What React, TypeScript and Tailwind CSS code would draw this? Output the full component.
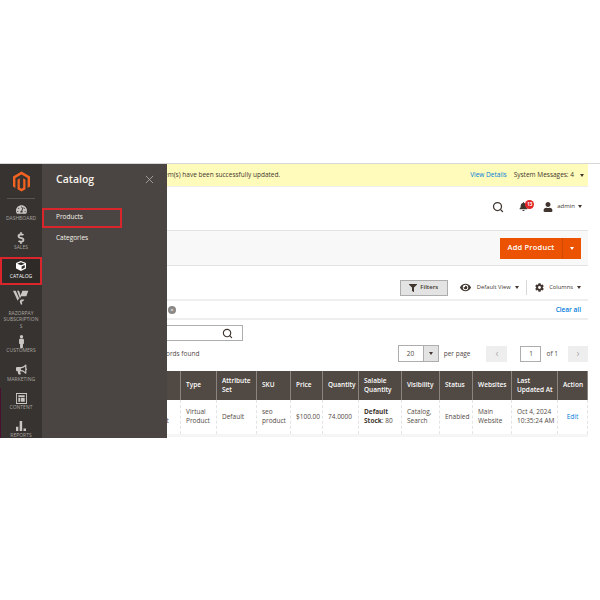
import { FaBell, FaCog, FaCube, FaDollarSign, FaEye, FaFilter, FaMale, FaBullhorn, FaTachometerAlt, FaUser } from "react-icons/fa";
import { FiSearch } from "react-icons/fi";

function MagentoLogo() {
  return (
    <svg viewBox="0 0 24 28" className="w-[17px] h-[21px]">
      <path fill="#f26322" d="M12 0 0 7v14l3.4 2V9l8.6-5 8.600 5v14l3.400-2V7z" />
      <path fill="#f26322" d="M12 24.200 9.600 22.800V9.500L6.400 11.400V24.800L12 28l5.600-3.200V11.400l-3.200-1.900v13.300z" />
    </svg>
  );
}

function RazorpayLogo() {
  return (
    <svg viewBox="0 0 24 24" className="w-[16px] h-[17px]" fill="#c9c6c3">
      <path d="M0 2h4l5 11-2 4z" />
      <path d="M6 2h3l3 8-1.500 4z" />
      <path d="M14 2h9l-3 8h-9z" />
      <path d="M12 15h5l-2 3h-2l1 4-2 1-2-5z" />
    </svg>
  );
}

function ContentIcon() {
  return (
    <svg viewBox="0 0 12 12" className="w-[11px] h-[11px]" fill="#c9c6c3">
      <path fillRule="evenodd" d="M0 0h12v12H0zM1 1v10h10V1z" />
      <path d="M2.500 2.500h7v1.800h-7zM2.500 5.200h2.200v4.300H2.500zM5.500 5.200h4v4.300h-4z" />
    </svg>
  );
}

function ReportsIcon() {
  return (
    <svg viewBox="0 0 12 12" className="w-[10px] h-[10px]" fill="#c9c6c3">
      <path d="M0 7h2.800v5H0zM4.400 0h3v12h-3zM9 9h3v3H9z" />
    </svg>
  );
}

function NavItem({ icon, label, className, labelGap = "" }: { icon: React.ReactNode; label: string; className: string; labelGap?: string }) {
  return (
    <div className={`shrink-0 flex flex-col items-center text-center px-[3px] ${className}`}>
      <div className="h-[12px] flex items-center justify-center text-[#c9c6c3]">{icon}</div>
      <span className={`text-[5px] leading-[6.500px] uppercase text-[#aaa6a0] [overflow-wrap:anywhere] ${labelGap}`}>{label}</span>
    </div>
  );
}

const headers = [
  { label: "Name", w: "w-[41px] pr-[5px]" },
  { label: "Type", w: "w-[36px] pr-[5px]" },
  { label: "Attribute Set", w: "w-[40px] pr-[5px]" },
  { label: "SKU", w: "w-[34px] pr-[5px]" },
  { label: "Price", w: "w-[32px] pr-[5px]" },
  { label: "Quantity", w: "w-[36px] pr-[5px]" },
  { label: "Salable Quantity", w: "w-[43px] pr-[5px]" },
  { label: "Visibility", w: "w-[38px] pr-[5px]" },
  { label: "Status", w: "w-[33px] pr-[5px]" },
  { label: "Websites", w: "w-[39px] pr-[5px]" },
  { label: "Last Updated At", w: "w-[46px] pr-[4px]" },
  { label: "Action", w: "w-[30px] pr-[3px]" },
];

const cells = ["seo product", "Virtual Product", "Default", "seo product", "$100.00", "74.0000"];

const cellClass = "px-[5px] leading-[8.500px] border-x border-dashed border-[#e3e3e3]";

function Caret({ color = "border-t-[#41362f]" }: { color?: string }) {
  return <span className={`inline-block w-0 h-0 border-x-[2.500px] border-x-transparent border-t-[3px] ${color}`} />;
}

export default function App() {
  return (
    <div className="w-[600px] h-[600px] bg-white font-['Open_Sans',sans-serif] overflow-hidden">
      <div className="h-[163px]" />
      <div className="relative h-[275px] overflow-hidden flex border-t border-[#d8d8d8]">
        <aside className="w-[42px] shrink-0 bg-[#373330] flex flex-col">
          <div className="h-[35px] shrink-0 mx-[7px] border-b border-[#5a5551] flex items-center justify-center">
            <MagentoLogo />
          </div>
          <NavItem className="mt-[4px]" icon={<FaTachometerAlt size={11} />} label="Dashboard" />
          <NavItem className="mt-[10px]" icon={<FaDollarSign size={12} />} label="Sales" />
          <div className="mt-[6.500px] h-[28px] shrink-0 border-2 border-[#d9252c] bg-[#2d2a28] flex flex-col items-center justify-center">
            <FaCube size={10} className="text-white" />
            <span className="mt-[2px] text-[5px] leading-[6.500px] uppercase text-white">Catalog</span>
          </div>
          <NavItem className="mt-[7px]" icon={<RazorpayLogo />} label="Razorpay Subscriptions" labelGap="mt-[6px]" />
          <NavItem className="mt-[6px]" icon={<FaMale size={13} />} label="Customers" />
          <NavItem className="mt-[10px]" icon={<FaBullhorn size={11} />} label="Marketing" />
          <NavItem className="mt-[10px]" icon={<ContentIcon />} label="Content" />
          <NavItem className="mt-[9px]" icon={<ReportsIcon />} label="Reports" />
        </aside>

        <main className="w-[546px] shrink-0 flex flex-col">
          <div className="h-[23px] shrink-0 bg-[#fffbbb] flex items-center justify-between pr-[4px] text-[6.500px] text-[#41362f] border-b border-[#eeeeee]">
            <span className="pl-[122px]">em(s) have been successfully updated.</span>
            <span className="flex items-center">
              <span className="text-[#007bdb]">View Details</span>
              <span className="ml-[7px]">System Messages: 4</span>
              <span className="ml-[6px] flex"><Caret /></span>
            </span>
          </div>

          <div className="h-[43px] shrink-0 flex items-center justify-end pr-[6px] pb-[4px] text-[#41362f]">
            <FiSearch size={12} strokeWidth={2.500} />
            <div className="relative ml-[15px] mr-[5px]">
              <FaBell size={9} />
              <span className="absolute -top-[2px] left-[6px] w-[9px] h-[9px] rounded-full bg-[#e22626] text-white text-[4.500px] font-bold flex items-center justify-center">13</span>
            </div>
            <FaUser size={10} className="ml-[10px]" />
            <span className="ml-[4px] text-[6px]">admin</span>
            <span className="ml-[3px] flex"><Caret /></span>
          </div>

          <div className="h-[36px] shrink-0 bg-[#f8f8f8] border-y border-[#e3e3e3] flex items-center justify-end pr-[7px]">
            <div className="h-[21px] w-[81px] bg-[#eb5202] flex items-center text-white text-[7.500px] font-semibold tracking-[0.200px]">
              <span className="flex-1 text-center">Add Product</span>
              <span className="w-[19px] h-full border-l border-[#d14a02] flex items-center justify-center">
                <Caret color="border-t-white" />
              </span>
            </div>
          </div>

          <div className="h-[33px] shrink-0 flex items-center justify-end pr-[7px] pt-[10px] text-[#41362f]">
            <div className="w-[48px] h-[16px] bg-[#e3e3e3] border border-[#adadad] flex items-center justify-center text-[6px] font-semibold">
              <FaFilter size={8} className="mr-[3px]" />
              Filters
            </div>
            <FaEye size={11} className="ml-[12px]" />
            <span className="ml-[6px] text-[5.800px]">Default View</span>
            <span className="ml-[4px] flex"><Caret /></span>
            <span className="ml-[7.500px] h-[15px] border-l border-[#d8d8d8]" />
            <FaCog size={9} className="ml-[8px]" />
            <span className="ml-[5px] text-[5.800px]">Columns</span>
            <span className="ml-[4px] flex"><Caret /></span>
          </div>

          <div className="h-[21px] shrink-0 border-y-2 border-y-[#eeeeee] flex items-center justify-between pr-[7px]">
            <span className="ml-[126px] w-[8px] h-[8px] rounded-full bg-[#8a8785] text-white text-[6px] leading-[8px] text-center">×</span>
            <span className="text-[6.500px] font-semibold text-[#007bdb]">Clear all</span>
          </div>

          <div className="mt-[5px] ml-[60px] w-[141px] h-[16px] shrink-0 border border-[#adadad] flex items-center justify-end pr-[9px] text-[#41362f]">
            <FiSearch size={11} strokeWidth={2.500} />
          </div>

          <div className="mt-[4px] h-[17px] shrink-0 flex items-center justify-between text-[6.500px] text-[#514943]">
            <span className="ml-[124px]">ords found</span>
            <div className="flex items-center">
              <div className="w-[41px] h-[17px] border border-[#adadad] flex">
                <span className="flex-1 flex items-center pl-[8px]">20</span>
                <span className="w-[15px] bg-[#e3e3e3] border-l border-[#adadad] flex items-center justify-center"><Caret /></span>
              </div>
              <span className="ml-[5px]">per page</span>
              <span className="ml-[16px] w-[21px] h-[16px] bg-[#eeeeee] flex items-center justify-center text-[#adadad] text-[10px]">‹</span>
              <span className="ml-[13px] w-[21px] h-[16px] border border-[#adadad] flex items-center justify-center">1</span>
              <span className="ml-[5px]">of 1</span>
              <span className="ml-[10px] w-[20px] h-[16px] bg-[#eeeeee] flex items-center justify-center text-[#adadad] text-[10px]">›</span>
            </div>
          </div>

          <div className="mt-[9px] flex justify-end">
            <table className="table-fixed w-[448px] border-collapse text-[6.500px] text-[#514943]">
              <thead>
                <tr className="h-[29px] bg-[#514943] text-white text-left">
                  {headers.map((h) => (
                    <th key={h.label} className={`${h.w} pl-[5px] font-semibold leading-[8.500px] border-x border-[#8a837e]`}>
                      {h.label === "Last Updated At" ? <>Last<br />Updated At</> : h.label}
                    </th>
                  ))}
                </tr>
              </thead>
              <tbody>
                <tr className="h-[35px] border-b-[3px] border-b-[#f5f5f5]">
                  {cells.map((c, i) => (
                    <td key={i} className={cellClass}>{c}</td>
                  ))}
                  <td className={cellClass}><b className="text-[#41362f]">Default Stock</b>: 80</td>
                  <td className={cellClass}>Catalog, Search</td>
                  <td className={cellClass}>Enabled</td>
                  <td className={cellClass}>Main Website</td>
                  <td className={`${cellClass} whitespace-nowrap`}>Oct 4, 2024<br />10:35:24 AM</td>
                  <td className={`${cellClass} text-center text-[#007bdb]`}>Edit</td>
                </tr>
              </tbody>
            </table>
          </div>
        </main>

        <section className="absolute left-[42px] top-0 bottom-0 w-[125px] bg-[#4a4542] text-[#f7f3eb]">
          <div className="flex items-center justify-between pl-[14px] pr-[13px] pt-[7px]">
            <span className="text-[10.500px] font-semibold leading-[16px]">Catalog</span>
            <svg viewBox="0 0 10 10" className="w-[9px] h-[9px]" stroke="#aaa6a0" fill="none"><path d="M1 1l8 8M9 1l-8 8" /></svg>
          </div>
          <div className="mt-[21px] w-[80px] h-[20px] border-2 border-[#d9252c] pl-[12px] pb-[3px] flex items-center text-[6.500px]">Products</div>
          <div className="mt-[3.500px] pl-[14px] text-[6.500px] leading-[11px]">Categories</div>
        </section>

        <span className="absolute left-0 top-[224px] bottom-0 w-px bg-[#4a1030]" />
      </div>
    </div>
  );
}
